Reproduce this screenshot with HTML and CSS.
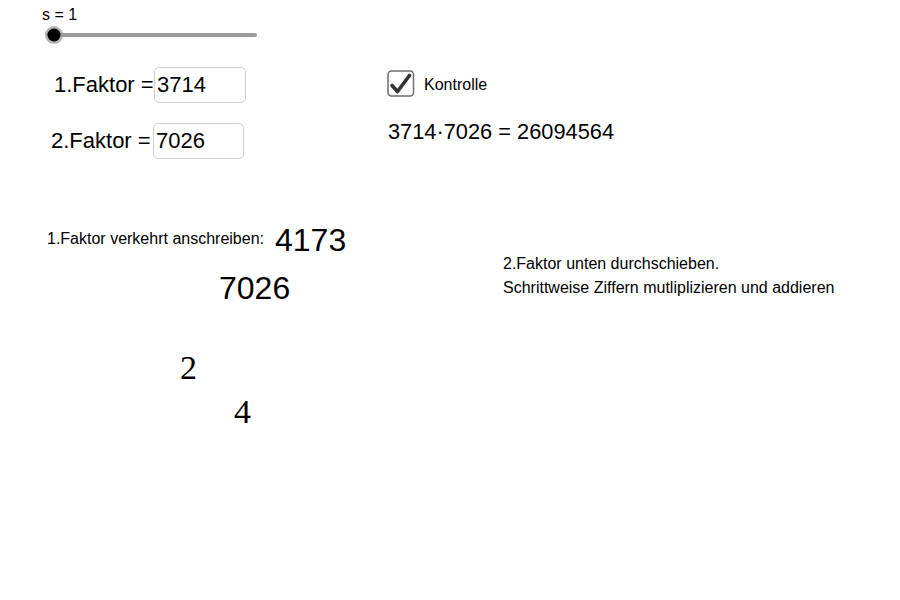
FILE: index.html
```html
<!DOCTYPE html>
<html>
<head>
<meta charset="utf-8">
<link rel="stylesheet" href="styles.css">
</head>
<body>
<div class="applet">
  <div class="txt t16 s-label">s = 1</div>
  <svg class="slider" width="220" height="24" viewBox="0 0 220 24">
    <line x1="6" y1="12" x2="213" y2="12" stroke="#9a9a9a" stroke-width="4" stroke-linecap="round"/>
    <circle cx="12" cy="12" r="9" fill="#9a9a9a" fill-opacity="0.75"/>
    <circle cx="12" cy="12" r="6.5" fill="#000"/>
  </svg>

  <div class="txt t22 f1-label">1.Faktor =</div>
  <div class="inbox in1"><span class="intext">3714</span></div>
  <div class="txt t22 f2-label">2.Faktor =</div>
  <div class="inbox in2"><span class="intext">7026</span></div>

  <svg class="check" width="28" height="28" viewBox="0 0 28 28">
    <rect x="1" y="1" width="25.5" height="25" rx="3.5" ry="3.5" fill="#fff" stroke="#6e6e6e" stroke-width="1.5"/>
    <path d="M5 15.5 L10.5 21.5 L22.5 5.5" fill="none" stroke="#333" stroke-width="3.6" stroke-linecap="round" stroke-linejoin="round"/>
  </svg>
  <div class="txt t16 kontrolle">Kontrolle</div>
  <div class="txt t22 product">3714·7026 = 26094564</div>

  <div class="txt t16 verkehrt">1.Faktor verkehrt anschreiben:</div>
  <div class="txt t32 rev">4173</div>
  <div class="txt t32 second">7026</div>

  <div class="txt t16 hint1">2.Faktor unten durchschieben.</div>
  <div class="txt t16 hint2">Schrittweise Ziffern mutliplizieren und addieren</div>

  <div class="txt serif d2">2</div>
  <div class="txt serif d4">4</div>
</div>
</body>
</html>
```
FILE: styles.css
```css
html, body {
  margin: 0;
  padding: 0;
  background: #fff;
}
.applet {
  position: relative;
  width: 900px;
  height: 600px;
  overflow: hidden;
  background: #fff;
  font-family: "Liberation Sans", Arial, sans-serif;
  color: #000;
}
.txt {
  position: absolute;
  line-height: 1;
  white-space: nowrap;
}
.t16 { font-size: 16px; }
.t22 { font-size: 22px; }
.t32 { font-size: 32px; }
.serif {
  font-family: "Liberation Serif", "Times New Roman", serif;
  font-size: 34px;
}
.s-label { left: 42px; top: 7px; }
.slider { position: absolute; left: 42px; top: 23px; }

.f1-label { left: 54px; top: 74px; }
.f2-label { left: 51px; top: 130px; }
.inbox {
  position: absolute;
  box-sizing: border-box;
  border: 1px solid #d0d0d0;
  border-radius: 5px;
  padding-left: 2px;
  font-size: 22px;
  line-height: 34px;
}
.in1 { left: 154px; top: 67px; width: 92px; height: 36px; }
.in2 { left: 153px; top: 123px; width: 91px; height: 36px; }

.check { position: absolute; left: 387px; top: 70px; }
.kontrolle { left: 424px; top: 77px; }
.product { left: 388px; top: 121px; font-size: 21.8px; }

.verkehrt { left: 47px; top: 231px; }
.rev { left: 275px; top: 224px; }
.second { left: 219px; top: 272px; }

.hint1 { left: 503px; top: 256px; }
.hint2 { left: 503px; top: 280px; }

.d2 { left: 180px; top: 351px; }
.d4 { left: 234px; top: 395px; }
```
